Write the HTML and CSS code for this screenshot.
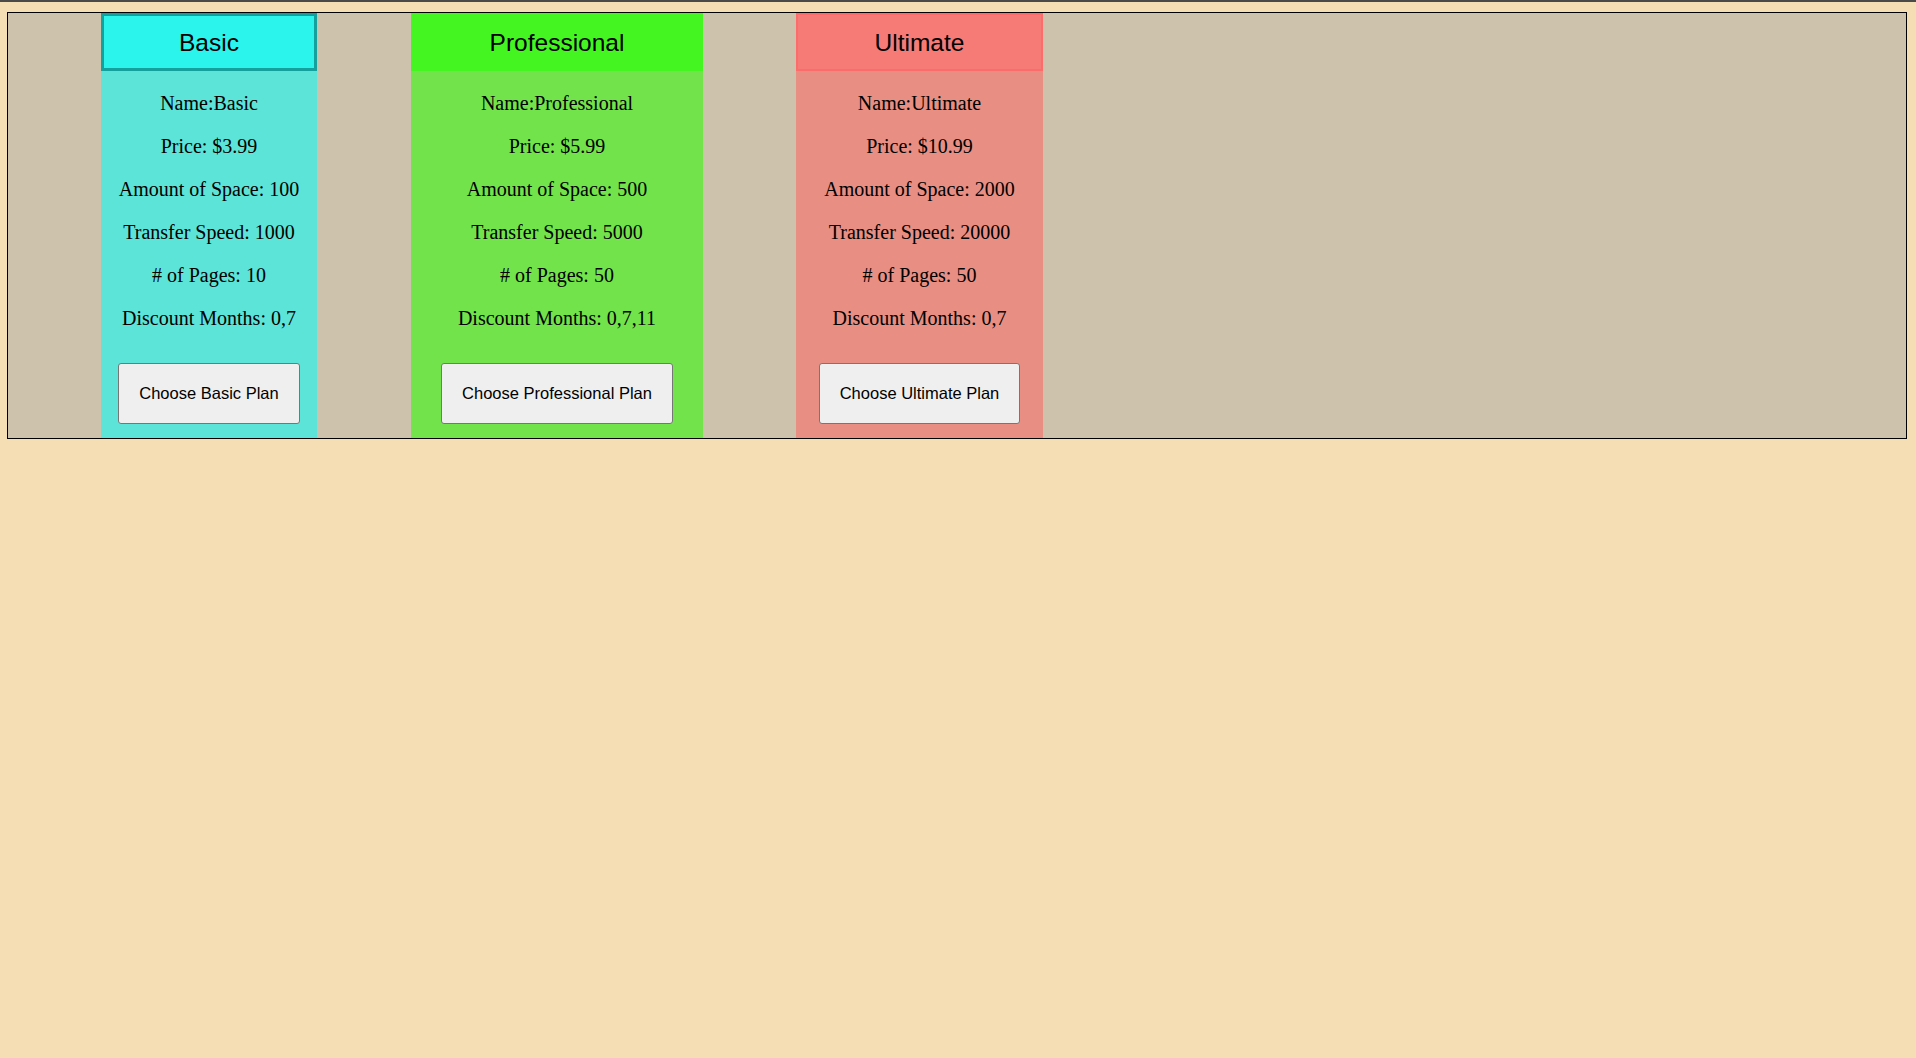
FILE: index.html
```html
<!DOCTYPE html>
<html>
<head>
<meta charset="utf-8">
<title>Plans</title>
<link rel="stylesheet" href="styles.css">
</head>
<body>
<div class="plans">
  <div class="card card-basic">
    <div class="card-head">Basic</div>
    <p>Name:Basic</p>
    <p>Price: $3.99</p>
    <p>Amount of Space: 100</p>
    <p>Transfer Speed: 1000</p>
    <p># of Pages: 10</p>
    <p>Discount Months: 0,7</p>
    <button class="choose">Choose Basic Plan</button>
  </div>
  <div class="card card-pro">
    <div class="card-head">Professional</div>
    <p>Name:Professional</p>
    <p>Price: $5.99</p>
    <p>Amount of Space: 500</p>
    <p>Transfer Speed: 5000</p>
    <p># of Pages: 50</p>
    <p>Discount Months: 0,7,11</p>
    <button class="choose">Choose Professional Plan</button>
  </div>
  <div class="card card-ult">
    <div class="card-head">Ultimate</div>
    <p>Name:Ultimate</p>
    <p>Price: $10.99</p>
    <p>Amount of Space: 2000</p>
    <p>Transfer Speed: 20000</p>
    <p># of Pages: 50</p>
    <p>Discount Months: 0,7</p>
    <button class="choose">Choose Ultimate Plan</button>
  </div>
</div>
</body>
</html>
```
FILE: styles.css
```css
html, body {
  margin: 0;
  padding: 0;
}
body {
  background: #f5deb3;
  border-top: 2px solid #4a4a4a;
  font-family: "Liberation Serif", "Times New Roman", serif;
  min-height: 1056px;
}
.plans {
  box-sizing: border-box;
  width: 1900px;
  margin: 10px 0 0 7px;
  border: 1px solid #000;
  background: #cdc2ac;
  display: flex;
  align-items: stretch;
  padding-left: 93px;
  gap: 93px;
}
.card {
  display: flex;
  flex-direction: column;
  align-items: center;
  text-align: center;
}
.card p {
  margin: 20px 0 0 0;
  font-size: 20px;
  line-height: 23px;
  color: #000;
}
.card .card-head + p {
  margin-top: 21px;
}
.card-head {
  box-sizing: border-box;
  align-self: stretch;
  height: 58px;
  border: 3px solid transparent;
  font-family: "Liberation Sans", Arial, sans-serif;
  font-size: 24.5px;
  line-height: 53px;
  color: #000;
}
.choose {
  margin: 33px 0 14px 0;
  height: 61px;
  padding: 0 20px;
  font-family: "Liberation Sans", Arial, sans-serif;
  font-size: 16.5px;
  color: #000;
  background: #efefef;
  border: 1px solid #767676;
  border-radius: 3px;
}
.card-basic {
  width: 216px;
  background: #5ce4d8;
}
.card-basic .card-head {
  background: #2af4ec;
  border-color: #14a09c;
}
.card-pro {
  width: 292px;
  margin-left: 1px;
  background: #72e34b;
}
.card-pro .card-head {
  background: #45f522;
  border-color: #45f522;
}
.card-ult {
  width: 247px;
  background: #e88e82;
}
.card-ult .card-head {
  background: #f67a76;
  border: 2px solid #fd6b6b;
  line-height: 55px;
}
```
